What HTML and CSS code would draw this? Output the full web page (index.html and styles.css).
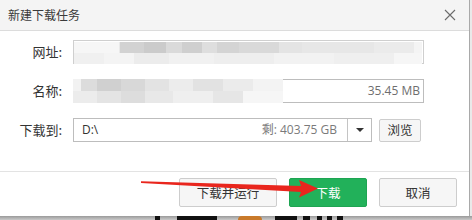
FILE: index.html
```html
<!DOCTYPE html>
<html lang="zh-CN">
<head>
<meta charset="utf-8">
<title>新建下载任务</title>
<link rel="stylesheet" href="styles.css">
</head>
<body>
<div class="page">
  <div class="dialog">
    <div class="titlebar">
      <span class="title">新建下载任务</span>
      <svg class="close" width="12" height="12" viewBox="0 0 12 12"><path d="M1 1L11 11M11 1L1 11" stroke="#6b6b6b" stroke-width="1.1" fill="none"/></svg>
    </div>
    <div class="form">
      <div class="row">
        <span class="label">网址:</span>
        <div class="field field-url">
          <div class="mosaic mosaic-url">
            <div class="mrow url-top"></div>
            <div class="mrow url-bot"></div>
          </div>
        </div>
      </div>
      <div class="row">
        <span class="label">名称:</span>
        <div class="field field-name">
          <div class="mosaic mosaic-name">
            <div class="mrow name-top"></div>
            <div class="mrow name-bot"></div>
          </div>
          <span class="size">35.45 MB</span>
        </div>
      </div>
      <div class="row">
        <span class="label">下载到:</span>
        <div class="field field-path">
          <span class="path">D:\</span>
          <span class="free">剩: 403.75 GB</span>
          <span class="drop"><span class="tri"></span></span>
        </div>
        <button class="btn btn-browse">浏览</button>
      </div>
    </div>
    <div class="footer">
      <button class="btn btn-run">下载并运行</button>
      <button class="btn btn-go">下载</button>
      <button class="btn btn-cancel">取消</button>
    </div>
  </div>
  <div class="backdrop">
    <span class="bk b1"></span>
    <span class="bk b2"></span>
    <span class="bk b3"></span>
    <span class="bk b4"></span>
    <span class="bk b5"></span>
    <span class="bk b6"></span>
    <span class="bk b7"></span>
    <span class="bk b8"></span>
  </div>
  <svg class="arrow" width="472" height="220" viewBox="0 0 472 220">
    <polygon points="141,181.2 301,186 299,180 318,188.5 299,197.5 301,192 141,183" fill="#e9261d"/>
  </svg>
</div>
</body>
</html>
```
FILE: styles.css
```css
* { box-sizing: border-box; }
html, body { margin: 0; padding: 0; }
body {
  font-family: "Noto Sans CJK SC", "Open Sans", sans-serif;
  color: #333;
  background: #c8c8c8;
}
.page {
  position: relative;
  width: 472px;
  height: 220px;
  overflow: hidden;
  background: #e9e9e9;
}
.dialog {
  width: 470px;
  height: 216px;
  background: #fff;
  border-right: 1px solid #a9a9a9;
  display: flex;
  flex-direction: column;
}
.titlebar {
  height: 31px;
  flex: none;
  background: #f4f4f4;
  border-bottom: 1px solid #dcdcdc;
  display: flex;
  align-items: center;
  justify-content: space-between;
  padding: 0 13px 0 8px;
}
.title {
  font-size: 12px;
  line-height: 16px;
  color: #3a3a3a;
}
.close { display: block; }
.form {
  padding-top: 9px;
  height: 140px;
  flex: none;
  display: flex;
  flex-direction: column;
  gap: 15px;
}
.row {
  display: flex;
  align-items: center;
  height: 24px;
}
.label {
  width: 62px;
  text-align: right;
  font-size: 13px;
  line-height: 18px;
  color: #333;
  margin-right: 11px;
  flex: none;
}
.field {
  position: relative;
  height: 24px;
  border: 1px solid #bdbdbd;
  background: #fff;
  display: flex;
  align-items: center;
}
.field-url, .field-name { width: 351px; }
.field-url { border-color: #cfcfcf; }
.mosaic {
  position: absolute;
  top: 0;
  left: 0;
  bottom: 0;
  display: flex;
  flex-direction: column;
}
.mosaic-url { right: 1px; top: 1px; bottom: -1px; left: 0; }
.mosaic-name { width: 210px; top: -1px; left: -1px; bottom: -1px; }
.mrow { flex: 1; }
.url-top {
  background: linear-gradient(to right,
    #f6f6f6 0, #f6f6f6 45px, #e9e9e9 45px, #e9e9e9 46px,
    #d2d2d2 46px, #d2d2d2 70px, #cbcbcb 70px, #cbcbcb 92px,
    #dadada 92px, #dadada 108px, #cfcfcf 108px, #cfcfcf 128px,
    #dedede 128px, #dedede 143px, #d4d4d4 143px, #d4d4d4 165px,
    #d9d9d9 165px, #d9d9d9 205px, #e4e4e4 205px, #e4e4e4 228px,
    #e7e7e7 228px, #e7e7e7 300px, #ebebeb 300px, #ebebeb 340px,
    #f4f4f4 340px);
}
.url-bot {
  background: linear-gradient(to right,
    #f0f0f0 0, #f0f0f0 30px, #f4f4f4 30px, #f4f4f4 60px,
    #ececec 60px, #ececec 95px, #f1f1f1 95px, #f1f1f1 140px,
    #eeeeee 140px, #eeeeee 200px, #f2f2f2 200px, #f2f2f2 260px,
    #efefef 260px, #efefef 320px, #f6f6f6 320px);
}
.name-top {
  background: linear-gradient(to right,
    #f2f2f2 0, #f2f2f2 8px, #dcdcdc 8px, #dcdcdc 24px,
    #d0d0d0 24px, #d0d0d0 48px, #d8d8d8 48px, #d8d8d8 72px,
    #e3e3e3 72px, #e3e3e3 96px, #ececec 96px, #ececec 120px,
    #e2e2e2 120px, #e2e2e2 150px, #ebebeb 150px, #ebebeb 180px,
    #f3f3f3 180px);
}
.name-bot {
  background: linear-gradient(to right,
    #ececec 0, #ececec 24px, #e4e4e4 24px, #e4e4e4 48px,
    #dddddd 48px, #dddddd 72px, #e8e8e8 72px, #e8e8e8 100px,
    #efefef 100px, #efefef 140px, #e6e6e6 140px, #e6e6e6 170px,
    #f6f6f6 170px);
}
.size {
  margin-left: auto;
  padding-right: 3px;
  font-family: "Open Sans", sans-serif;
  font-size: 12px;
  line-height: 16px;
  color: #6e6e6e;
}
.field-path {
  width: 299px;
  margin-right: 7px;
}
.path {
  padding-left: 8px;
  font-family: "Open Sans", sans-serif;
  font-size: 12px;
  line-height: 16px;
  color: #333;
}
.free {
  margin-left: auto;
  padding-right: 10px;
  font-size: 12px;
  line-height: 16px;
  color: #7a7a7a;
  font-family: "Open Sans", "Noto Sans CJK SC", sans-serif;
}
.drop {
  width: 24px;
  height: 22px;
  border-left: 1px solid #c4c4c4;
  display: flex;
  align-items: center;
  justify-content: center;
}
.tri {
  width: 0;
  height: 0;
  border-left: 4px solid transparent;
  border-right: 4px solid transparent;
  border-top: 4px solid #333;
}
.btn {
  font-family: "Noto Sans CJK SC", sans-serif;
  font-size: 12px;
  line-height: 16px;
  color: #333;
  background: #f6f6f6;
  border: 1px solid #cdcdcd;
  border-radius: 2px;
  padding: 0;
  margin: 0;
}
.btn-browse {
  width: 42px;
  height: 23px;
  font-size: 12.5px;
}
.footer {
  border-top: 1px solid #e3e3e3;
  flex: 1;
  display: flex;
  justify-content: flex-end;
  align-items: flex-start;
  gap: 12px;
  padding: 6px 12px 0 0;
}
.footer .btn { height: 29px; width: 78px; font-size: 12.5px; }
.footer .btn-run { width: 98px; }
.btn-go {
  background: #22b15a;
  border-color: #1ea452;
  color: #fff;
}
.backdrop {
  height: 4px;
  display: flex;
  background: linear-gradient(to bottom, #9a9a9a, #c9c9c9);
}
.bk { height: 4px; background: #111; flex: none; }
.b1 { margin-left: 155px; width: 5px; }
.b2 { margin-left: 17px; width: 40px; }
.b3 { margin-left: 21px; width: 24px; background: #c97a2a; border-radius: 12px 12px 0 0; }
.b4 { margin-left: 13px; width: 22px; }
.b5 { margin-left: 6px; width: 7px; }
.b6 { margin-left: 7px; width: 5px; }
.b7 { margin-left: 5px; width: 5px; }
.b8 { margin-left: 5px; width: 6px; }
.arrow {
  position: absolute;
  left: 0;
  top: 0;
  pointer-events: none;
}
```
